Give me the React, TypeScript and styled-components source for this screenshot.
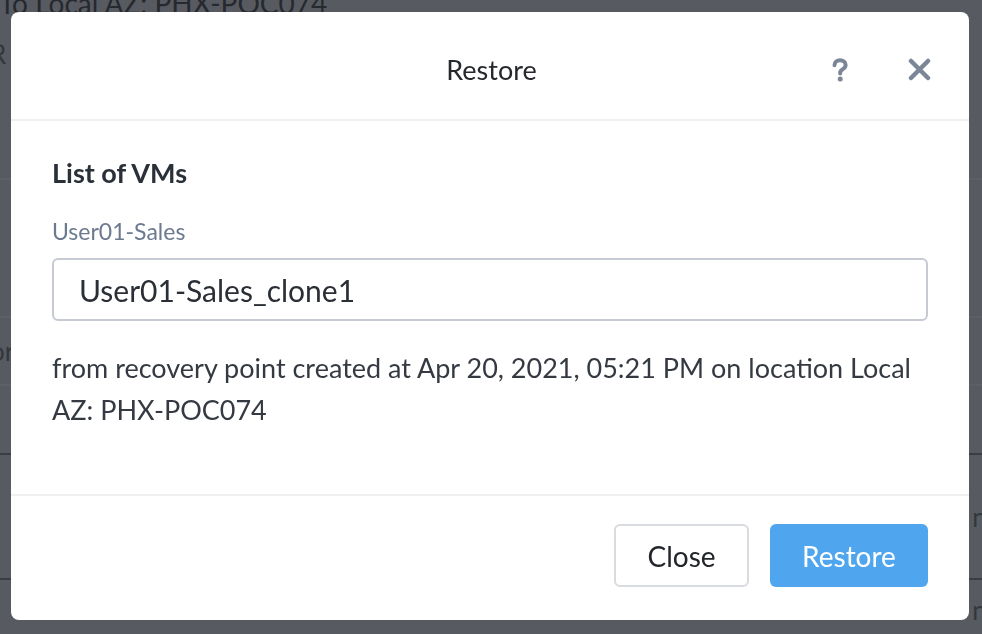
import React from "react";
import styled, { createGlobalStyle } from "styled-components";

const Global = createGlobalStyle`
  html, body { margin: 0; padding: 0; }
  body {
    width: 982px; height: 634px; overflow: hidden;
    background: #575b61;
    font-family: "Lato", "Open Sans", sans-serif;
  }
`;

const Page = styled.div`
  width: 982px;
  height: 634px;
  overflow: hidden;
  background: #575b61;
  color: #25282d;
`;

const PageTitle = styled.div`
  font-size: 28px;
  line-height: 30px;
  margin: -12px 0 0 -1px;
  height: 30px;
  color: #26292e;
`;

const BgRow = styled.div<{ $h: number; $line?: string }>`
  height: ${(p) => p.$h}px;
  border-bottom: 2px solid ${(p) => p.$line ?? "#5c6066"};
  display: flex;
  align-items: center;
  justify-content: space-between;
  font-size: 26px;
  color: #33373d;
  margin-left: -10px;
  margin-right: -14px;
`;

const Overlay = styled.div`
  position: fixed;
  inset: 0;
  display: flex;
  align-items: flex-start;
  padding: 12px 0 0 11px;
`;

const Modal = styled.div`
  width: 958px;
  height: 608px;
  background: #ffffff;
  border-radius: 8px;
  display: flex;
  flex-direction: column;
  overflow: hidden;
`;

const Header = styled.div`
  height: 109px;
  box-sizing: border-box;
  border-bottom: 2px solid #eff0f1;
  display: grid;
  grid-template-columns: 1fr auto 1fr;
  align-items: center;
  padding: 8px 38px 0 41px;
`;

const Title = styled.div`
  grid-column: 2;
  font-size: 27px;
  color: #25282d;
`;

const HeaderIcons = styled.div`
  grid-column: 3;
  justify-self: end;
  display: flex;
  align-items: center;
  gap: 59px;
`;

const Body = styled.div`
  height: 375px;
  box-sizing: border-box;
  padding: 32px 41px 0 41px;
  border-bottom: 2px solid #eff0f1;
`;

const SectionTitle = styled.div`
  font-size: 27px;
  font-weight: 700;
  color: #2a3038;
  line-height: 40px;
  margin-bottom: 23px;
`;

const FieldLabel = styled.div`
  font-size: 23px;
  color: #6c7a8f;
  line-height: 30px;
  margin-bottom: 12px;
`;

const Input = styled.div`
  height: 63px;
  box-sizing: border-box;
  border: 2px solid #c5cad3;
  border-radius: 6px;
  display: flex;
  align-items: center;
  padding: 0 25px;
  font-size: 30px;
  color: #2a2f36;
`;

const Desc = styled.p`
  margin: 26px 0 0;
  font-size: 27px;
  line-height: 42px;
  color: #353a42;
`;

const Footer = styled.div`
  flex: 1;
  display: flex;
  justify-content: flex-end;
  align-items: flex-start;
  gap: 21px;
  padding: 28px 41px 0;
`;

const Button = styled.button<{ $primary?: boolean }>`
  height: 63px;
  box-sizing: border-box;
  border-radius: 6px;
  font-family: inherit;
  font-size: 28px;
  padding: 0;
  width: ${(p) => (p.$primary ? 158 : 135)}px;
  background: ${(p) => (p.$primary ? "#4fa6ef" : "#ffffff")};
  color: ${(p) => (p.$primary ? "#ffffff" : "#22252a")};
  border: ${(p) => (p.$primary ? "none" : "2px solid #d8dbe0")};
`;

const HelpIcon = () => (
  <svg width="18" height="24" viewBox="0 0 18 24">
    <path
      d="M3.5 7.2 C3.5 4 6 2.2 9 2.2 C12.2 2.2 14.6 4.2 14.6 7 C14.6 9.4 13 10.5 11.4 11.4 C10 12.2 9.2 13 9.2 14.6 L9.2 15.4"
      stroke="#7b8696"
      strokeWidth="4"
      strokeLinecap="round"
      fill="none"
    />
    <circle cx="9.2" cy="21" r="2.5" fill="#7b8696" />
  </svg>
);

const CloseIcon = () => (
  <svg width="23" height="23" viewBox="0 0 23 23">
    <path d="M3 3 L20 20 M20 3 L3 20" stroke="#7b8696" strokeWidth="4.5" strokeLinecap="round" />
  </svg>
);

export default function App() {
  return (
    <>
      <Global />
      <Page>
        <PageTitle>To Local AZ: PHX-POC074</PageTitle>
        <BgRow $h={72} $line="transparent">
          <span>R</span>
        </BgRow>
        <BgRow $h={86} />
        <BgRow $h={136} />
        <BgRow $h={66}>
          <span>or</span>
          <span />
        </BgRow>
        <BgRow $h={67} $line="#3a3d42" />
        <BgRow $h={123} $line="#3a3d42">
          <span />
          <span>nt</span>
        </BgRow>
        <BgRow $h={60}>
          <span />
          <span>nt</span>
        </BgRow>
      </Page>
      <Overlay>
        <Modal>
          <Header>
            <Title>Restore</Title>
            <HeaderIcons>
              <HelpIcon />
              <CloseIcon />
            </HeaderIcons>
          </Header>
          <Body>
            <SectionTitle>List of VMs</SectionTitle>
            <FieldLabel>User01-Sales</FieldLabel>
            <Input>User01-Sales_clone1</Input>
            <Desc>
              from recovery point created at Apr 20, 2021, 05:21 PM on location Local AZ: PHX-POC074
            </Desc>
          </Body>
          <Footer>
            <Button>Close</Button>
            <Button $primary>Restore</Button>
          </Footer>
        </Modal>
      </Overlay>
    </>
  );
}
